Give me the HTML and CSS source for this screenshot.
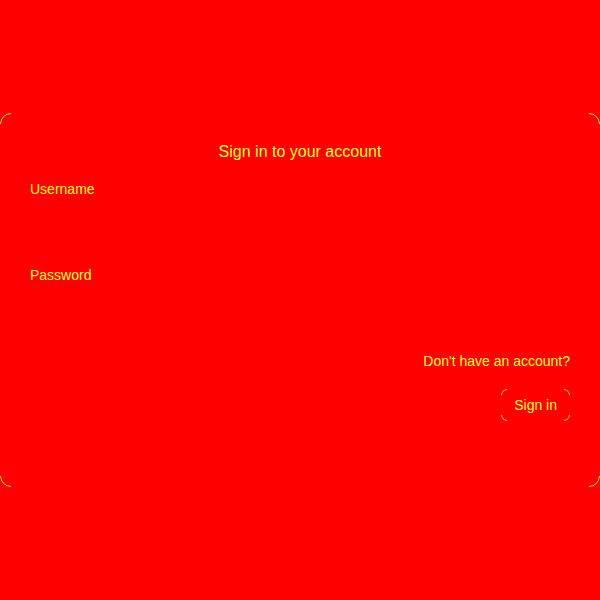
FILE: index.html
```html
<!DOCTYPE html>
<html lang="en">
<head>
<meta charset="utf-8">
<title>Sign in</title>
<link rel="stylesheet" href="styles.css">
</head>
<body>
  <main class="page">
    <form class="card">
      <h1 class="title">Sign in to your account</h1>
      <div class="field">
        <label class="label" for="username">Username</label>
        <input class="input" id="username" type="text">
      </div>
      <div class="field">
        <label class="label" for="password">Password</label>
        <input class="input" id="password" type="password">
      </div>
      <p class="signup">Don't have an account?</p>
      <div class="actions">
        <button class="btn" type="button">Sign in</button>
      </div>
    </form>
  </main>
</body>
</html>
```
FILE: styles.css
```css
* { box-sizing: border-box; }
html, body { margin: 0; padding: 0; background: #ff0000; }
body {
  font-family: "Liberation Sans", Arial, sans-serif;
  color: #ffff33;
}
.page {
  min-height: 100vh;
  display: flex;
  align-items: center;
  justify-content: center;
}
.card {
  position: relative;
  width: 600px;
  padding: 28px 30px 66px;
  display: flex;
  flex-direction: column;
}
.card::before,
.btn::before {
  content: "";
  position: absolute;
  inset: 0;
  border: 1.5px solid #ffff00;
  border-radius: 11px;
  -webkit-mask:
    linear-gradient(to right, #000 11px, transparent 11px, transparent calc(100% - 11px), #000 calc(100% - 11px)),
    linear-gradient(to bottom, #000 11px, transparent 11px, transparent calc(100% - 11px), #000 calc(100% - 11px));
  -webkit-mask-composite: source-in;
  mask-composite: intersect;
  pointer-events: none;
}
.title {
  margin: 0 0 18px;
  font-size: 16px;
  line-height: 22px;
  font-weight: 400;
  text-align: center;
}
.field {
  display: flex;
  flex-direction: column;
  margin-bottom: 22px;
}
.label {
  font-size: 14px;
  line-height: 16px;
  margin-bottom: 8px;
}
.input {
  height: 40px;
  border: none;
  background: transparent;
  outline: none;
  font: inherit;
  color: inherit;
}
.signup {
  margin: 0 0 20px;
  font-size: 14px;
  line-height: 16px;
  text-align: right;
}
.actions {
  display: flex;
  justify-content: flex-end;
}
.btn {
  position: relative;
  height: 32px;
  padding: 0 13px;
  border: none;
  background: transparent;
  color: #ffff33;
  font-family: "Liberation Sans", Arial, sans-serif;
  font-size: 14px;
  line-height: 16px;
}
.btn::before {
  border-radius: 6px;
  -webkit-mask:
    linear-gradient(to right, #000 6px, transparent 6px, transparent calc(100% - 6px), #000 calc(100% - 6px)),
    linear-gradient(to bottom, #000 6px, transparent 6px, transparent calc(100% - 6px), #000 calc(100% - 6px));
  -webkit-mask-composite: source-in;
  mask-composite: intersect;
}
```
